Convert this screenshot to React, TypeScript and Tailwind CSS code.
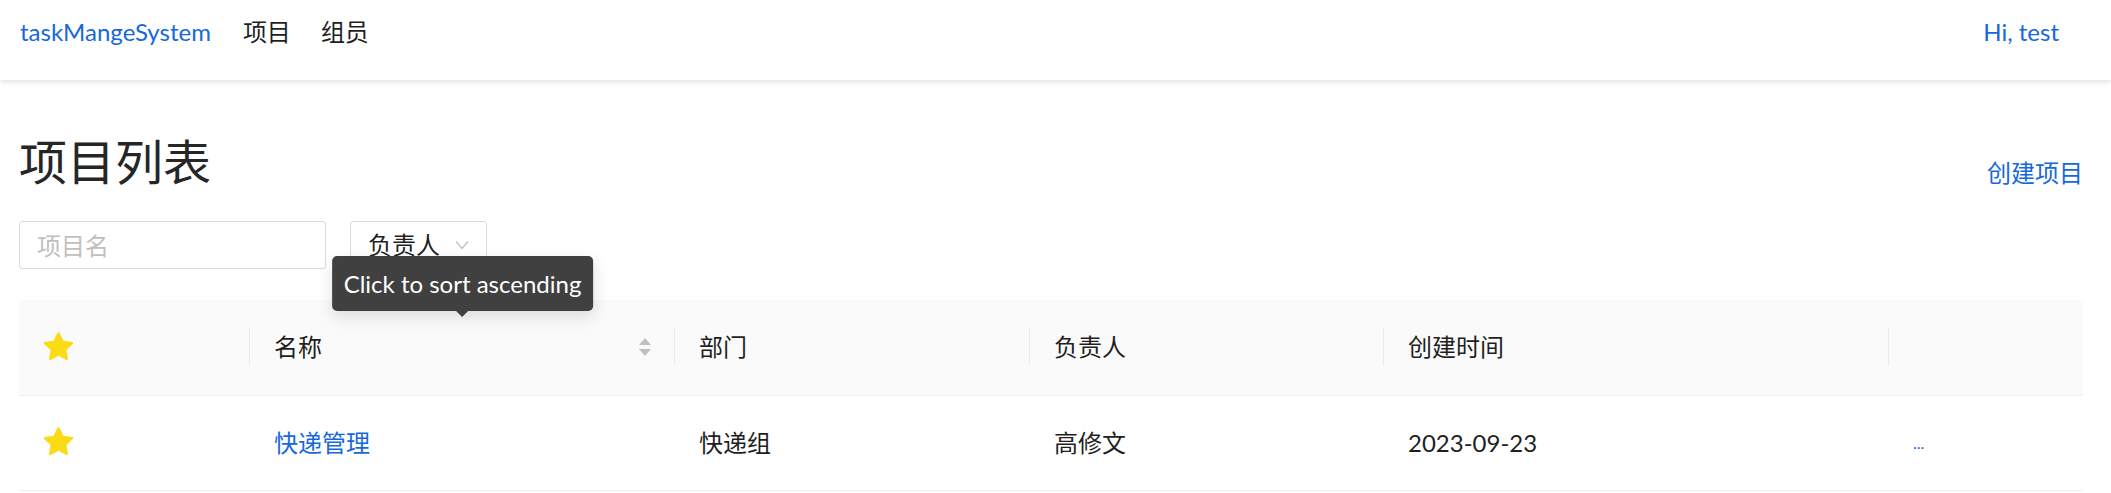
import { useState } from "react";

type Project = {
  id: number;
  name: string;
  dept: string;
  owner: string;
  created: string;
  pinned: boolean;
};

const projects: Project[] = [
  { id: 1, name: "快递管理", dept: "快递组", owner: "高修文", created: "2023-09-23", pinned: true },
];

// antd style filled star
const Star = () => (
  <svg viewBox="64 64 896 896" className="h-[31px] w-[31px]" fill="#fadb14">
    <path d="M908.1 353.1l-253.9-36.9L540.7 86.1c-3.1-6.3-8.2-11.4-14.5-14.5-15.8-7.8-35-1.3-42.9 14.5L369.8 316.2l-253.9 36.9c-7 1-13.4 4.3-18.3 9.3a32.05 32.05 0 00.6 45.3l183.7 179.1-43.4 252.9a31.95 31.95 0 0046.4 33.7L512 754l227.1 119.4c6.2 3.3 13.4 4.4 20.3 3.2 17.4-3 29.1-19.5 26.1-36.9l-43.4-252.9 183.7-179.1c5-4.9 8.3-11.3 9.3-18.3 2.7-17.5-9.5-33.7-27-36.3z" />
  </svg>
);

const Sorter = () => (
  <div className="flex flex-col gap-[4px]">
    <svg width="12" height="7" viewBox="0 0 12 7">
      <path d="M6 0 L12 7 L0 7 Z" fill="#bfbfbf" />
    </svg>
    <svg width="12" height="7" viewBox="0 0 12 7">
      <path d="M0 0 L12 0 L6 7 Z" fill="#bfbfbf" />
    </svg>
  </div>
);

const Sep = () => (
  <span className="absolute right-0 top-1/2 h-[38px] w-px -translate-y-1/2 bg-[#ebebeb]" />
);

export default function App() {
  const [keyword, setKeyword] = useState("");

  //Filter the list by project name
  const list = projects.filter((p) => p.name.includes(keyword));

  return (
    <div className="bg-white text-[24px] text-[#1f1f1f] [font-family:Lato,'Noto_Sans_CJK_SC',sans-serif]">
      <header className="flex h-[80px] items-start justify-between pl-[20px] pr-[52px] pt-[14px] leading-[36px] shadow-[0_2px_5px_rgba(0,0,0,0.12)]">
        <div className="flex items-center">
          <span className="text-[#1668dc]">taskMangeSystem</span>
          <span className="ml-[32px]">项目</span>
          <span className="ml-[30px]">组员</span>
        </div>
        <span className="text-[#1668dc]">Hi, test</span>
      </header>

      <main className="pl-[19px] pr-[28px]">
        <div className="mt-[53px] flex items-end justify-between">
          <h1 className="text-[48px] leading-[58px] text-[#262626]">项目列表</h1>
          <a className="text-[#1668dc] leading-[36px]">创建项目</a>
        </div>

        <div className="mt-[30px] flex gap-[24px]">
          <input
            className="h-[48px] w-[307px] rounded-[3px] border border-[#d9d9d9] px-[17px] outline-none placeholder:text-[#bfbfbf]"
            placeholder="项目名"
            value={keyword}
            onChange={(e) => setKeyword(e.currentTarget.value)}
          />
          <div className="flex h-[48px] w-[137px] items-center justify-between rounded-[3px] border border-[#d9d9d9] pl-[17px] pr-[17px]">
            <span>负责人</span>
            <svg width="14" height="10" viewBox="0 0 14 10" fill="none">
              <path d="M1 1.5 L7 8.5 L13 1.5" stroke="#bfbfbf" strokeWidth="1.3" />
            </svg>
          </div>
        </div>

        <table className="mt-[31px] w-full border-collapse">
          <thead>
            <tr className="h-[95px] border-b border-[#f0f0f0] bg-[#fafafa]">
              <th className="relative w-[231px] px-[24px] text-left font-normal">
                <Star />
                <Sep />
              </th>
              <th className="relative w-[425px] px-[24px] text-left font-normal">
                <div className="flex items-center justify-between">
                  <span>名称</span>
                  <Sorter />
                </div>
                <div className="absolute left-1/2 top-[-44px] z-10 -translate-x-1/2 whitespace-nowrap rounded-[5px] bg-[#404040] px-[12px] py-[9px] leading-[37px] text-white shadow-[0_6px_16px_rgba(0,0,0,0.12)]">
                  Click to sort ascending
                  <span className="absolute left-1/2 top-full -translate-x-1/2 border-x-[6px] border-t-[6px] border-x-transparent border-t-[#404040]" />
                </div>
                <Sep />
              </th>
              <th className="relative w-[355px] px-[24px] text-left font-normal">
                部门
                <Sep />
              </th>
              <th className="relative w-[354px] px-[24px] text-left font-normal">
                负责人
                <Sep />
              </th>
              <th className="relative w-[505px] px-[24px] text-left font-normal">
                创建时间
                <Sep />
              </th>
              <th className="px-[24px] text-left font-normal"></th>
            </tr>
          </thead>
          <tbody>
            {list.map((p) => (
              <tr key={p.id} className="h-[95px] border-b border-[#f0f0f0]">
                <td className="px-[24px]">{p.pinned && <Star />}</td>
                <td className="px-[24px] text-[#1668dc]">{p.name}</td>
                <td className="px-[24px]">{p.dept}</td>
                <td className="px-[24px]">{p.owner}</td>
                <td className="px-[24px]">{p.created}</td>
                <td className="px-[24px] text-[16px] text-[#1668dc]">...</td>
              </tr>
            ))}
          </tbody>
        </table>
      </main>
    </div>
  );
}
